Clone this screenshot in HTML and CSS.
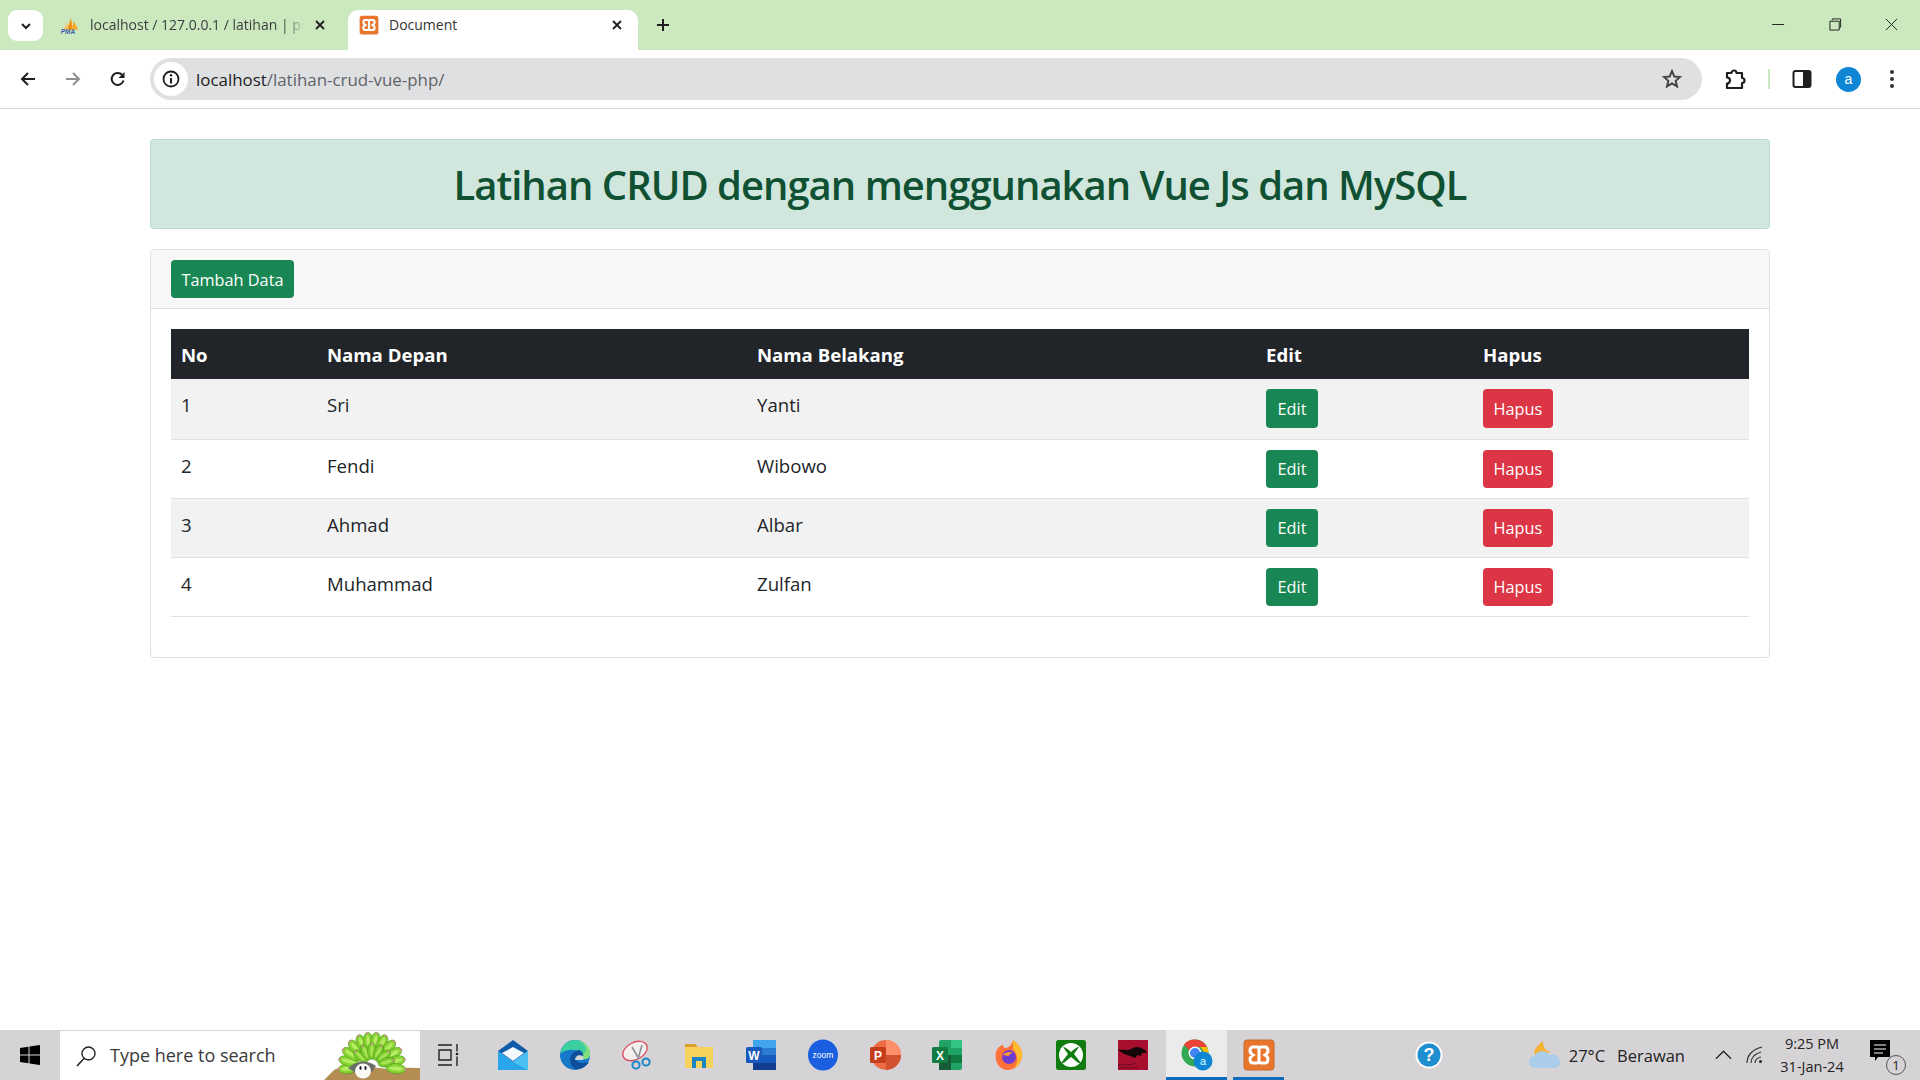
FILE: index.html
```html
<!DOCTYPE html>
<html lang="id">
<head>
<meta charset="utf-8">
<title>Document</title>
<link rel="stylesheet" href="styles.css">
</head>
<body>
<header class="chrome">
  <div class="tabstrip">
    <button class="tabsearch"><svg width="14" height="14" viewBox="0 0 14 14"><path d="M3 5l4 4 4-4" fill="none" stroke="#1f1f1f" stroke-width="2"/></svg></button>
    <div class="tab tab-first">
      <svg class="favicon" viewBox="0 0 24 20"><path d="M9 15L13 2l2 13z" fill="#f29111"/><path d="M14 15l2-9 5 9z" fill="#f6a623"/><path d="M5 15l4-8 1 8z" fill="#f7c16b"/><text x="2" y="20" class="pma">PMA</text></svg>
      <span class="tabtext fade">localhost / 127.0.0.1 / latihan | p</span>
      <svg class="tabclose" viewBox="0 0 12 12"><path d="M2 2l8 8M10 2l-8 8" stroke="#1f1f1f" stroke-width="1.8"/></svg>
    </div>
    <div class="tab tab-active">
      <svg class="favicon" viewBox="0 0 32 32"><rect x="1" y="1" width="30" height="30" rx="4" fill="#e8762d"/><path d="M10 8h4c2 0 2 3 2 3s0-3 2-3h4c2 0 3 2 3 4s-3 4-3 4 3 2 3 4-1 4-3 4h-4c-2 0-2-3-2-3s0 3-2 3h-4c-2 0-3-2-3-4s3-4 3-4-3-2-3-4 1-4 3-4zM16 11v10" fill="none" stroke="#fff" stroke-width="3.500"/></svg>
      <span class="tabtext">Document</span>
      <svg class="tabclose" viewBox="0 0 12 12"><path d="M2 2l8 8M10 2l-8 8" stroke="#1f1f1f" stroke-width="1.8"/></svg>
    </div>
    <svg class="newtab" viewBox="0 0 14 14"><path d="M7 1v12M1 7h12" stroke="#1f1f1f" stroke-width="2"/></svg>
    <div class="winctl">
      <svg viewBox="0 0 14 14"><path d="M0 7h13" stroke="#1a1a1a"/></svg>
      <svg viewBox="0 0 14 14"><path d="M3.500 2.500V1h9v9H11M1 3.500h10v9.500H1z" fill="none" stroke="#1a1a1a"/></svg>
      <svg viewBox="0 0 14 14"><path d="M1 1l12 12M13 1L1 13" stroke="#1a1a1a"/></svg>
    </div>
  </div>
  <div class="toolbar">
    <svg class="navicon" viewBox="0 0 16 16"><path d="M15 8H2M8 2L2 8l6 6" fill="none" stroke="#1f1f1f" stroke-width="2"/></svg>
    <svg class="navicon" viewBox="0 0 16 16"><path d="M1 8h13M8 2l6 6-6 6" fill="none" stroke="#8d8f92" stroke-width="2"/></svg>
    <svg class="navicon" viewBox="0 0 16 16"><path d="M13.500 9.500A6 6 0 1 1 12 3.700" fill="none" stroke="#1f1f1f" stroke-width="2"/><path d="M14.500 1v6h-6z" fill="#1f1f1f"/></svg>
    <div class="omnibox">
      <span class="siteinfo"><svg viewBox="0 0 18 18" width="18" height="18"><circle cx="9" cy="9" r="7.500" fill="none" stroke="#1f1f1f" stroke-width="1.800"/><path d="M9 8v5.500" stroke="#1f1f1f" stroke-width="2"/><circle cx="9" cy="5.300" r="1.200" fill="#1f1f1f"/></svg></span>
      <span class="url"><span class="url-host">localhost</span>/latihan-crud-vue-php/</span>
      <svg class="star" viewBox="0 0 20 20"><path d="M10 2.200l2.300 5.300 5.700.5-4.300 3.800 1.300 5.600-5-3-5 3 1.300-5.600L2 8l5.700-.5z" fill="none" stroke="#444" stroke-width="2"/></svg>
    </div>
    <svg class="tool tool-puzzle" viewBox="0 0 22 22"><path d="M3 5h4.500a2.500 2.500 0 0 1 5 0H18v5a2.500 2.500 0 0 1 0 5v5H3v-4.500a2.500 2.500 0 0 0 0-6z" fill="none" stroke="#1f1f1f" stroke-width="2.200" stroke-linejoin="round"/></svg>
    <span class="sep"></span>
    <svg class="tool tool-side" viewBox="0 0 20 20"><rect x="1.500" y="2" width="17" height="16" rx="2" fill="#fff" stroke="#1f1f1f" stroke-width="2"/><rect x="11" y="2" width="8" height="16" fill="#1f1f1f"/></svg>
    <span class="avatar">a</span>
    <svg class="tool tool-menu" viewBox="0 0 6 20"><circle cx="3" cy="3" r="2" fill="#333"/><circle cx="3" cy="10" r="2" fill="#333"/><circle cx="3" cy="17" r="2" fill="#333"/></svg>
  </div>
</header>

<main class="page">
  <div class="container">
    <div class="alert"><h1>Latihan CRUD dengan menggunakan Vue Js dan MySQL</h1></div>
    <section class="card">
      <div class="card-header"><button class="btn btn-success">Tambah Data</button></div>
      <div class="card-body">
        <table class="table">
          <colgroup><col class="c1"><col class="c2"><col class="c3"><col class="c4"><col class="c5"></colgroup>
          <thead><tr><th>No</th><th>Nama Depan</th><th>Nama Belakang</th><th>Edit</th><th>Hapus</th></tr></thead>
          <tbody>
            <tr><td>1</td><td>Sri</td><td>Yanti</td><td class="act"><button class="btn btn-success">Edit</button></td><td class="act"><button class="btn btn-danger">Hapus</button></td></tr>
            <tr><td>2</td><td>Fendi</td><td>Wibowo</td><td class="act"><button class="btn btn-success">Edit</button></td><td class="act"><button class="btn btn-danger">Hapus</button></td></tr>
            <tr><td>3</td><td>Ahmad</td><td>Albar</td><td class="act"><button class="btn btn-success">Edit</button></td><td class="act"><button class="btn btn-danger">Hapus</button></td></tr>
            <tr><td>4</td><td>Muhammad</td><td>Zulfan</td><td class="act"><button class="btn btn-success">Edit</button></td><td class="act"><button class="btn btn-danger">Hapus</button></td></tr>
          </tbody>
        </table>
      </div>
    </section>
  </div>
</main>

<footer class="taskbar">
  <svg class="start" viewBox="0 0 20 20"><path d="M0 3l8.500-1.200V9.500H0zM9.500 1.600L20 0v9.500H9.500zM0 10.500h8.500v7.700L0 17zM9.500 10.500H20V20L9.500 18.400z" fill="#000"/></svg>
  <div class="search">
    <svg class="searchicon" viewBox="0 0 22 22"><circle cx="13.500" cy="8.500" r="6.500" fill="none" stroke="#222" stroke-width="1.400"/><path d="M9 13.500L2 21" stroke="#222" stroke-width="1.600"/></svg>
    <span class="searchtext">Type here to search</span>
    <svg class="mascot" viewBox="0 0 96 50">
      <defs>
        <g id="leaf"><ellipse cx="48" cy="12" rx="5" ry="10" fill="#86d431" stroke="#4f9a1d" stroke-width=".6"/><ellipse cx="48" cy="12" rx="2" ry="7" fill="#b6ec62"/><circle cx="48" cy="3" r="1.100" fill="#e58aa8"/></g>
        <g id="leaf2"><ellipse cx="48" cy="21" rx="4.500" ry="8.500" fill="#78c92a" stroke="#4f9a1d" stroke-width=".6"/><ellipse cx="48" cy="21" rx="1.800" ry="6" fill="#a8e455"/><circle cx="48" cy="14" r="1" fill="#e58aa8"/></g>
      </defs>
      <path d="M0 50L10 40q10-5 26-4l28 3q16-2 32-1v12z" fill="#b38d52"/>
      <use href="#leaf" transform="rotate(-96 48 36)"/><use href="#leaf" transform="rotate(-78 48 36)"/><use href="#leaf" transform="rotate(-60 48 36)"/><use href="#leaf" transform="rotate(-42 48 36)"/><use href="#leaf" transform="rotate(-24 48 36)"/><use href="#leaf" transform="rotate(-8 48 36)"/><use href="#leaf" transform="rotate(8 48 36)"/><use href="#leaf" transform="rotate(24 48 36)"/><use href="#leaf" transform="rotate(42 48 36)"/><use href="#leaf" transform="rotate(60 48 36)"/><use href="#leaf" transform="rotate(78 48 36)"/><use href="#leaf" transform="rotate(96 48 36)"/>
      <use href="#leaf2" transform="rotate(-50 48 36)"/><use href="#leaf2" transform="rotate(-25 48 36)"/><use href="#leaf2"/><use href="#leaf2" transform="rotate(25 48 36)"/><use href="#leaf2" transform="rotate(50 48 36)"/><use href="#leaf2" transform="rotate(75 48 36)"/>
      <path d="M24 38q14-12 28-2l-4 6H30z" fill="#6d6f6a"/>
      <ellipse cx="39" cy="41" rx="8" ry="7.500" fill="#fbfbf6"/>
      <ellipse cx="36.500" cy="38" rx="1.100" ry="2" fill="#223"/><ellipse cx="41.500" cy="38" rx="1.100" ry="2" fill="#223"/>
    </svg>
  </div>
  <div class="apps">
    <span class="app app-view"><svg viewBox="0 0 22 24"><path d="M0 2h14M1 7h12v10H1zM0 22h14M19 1v7.500M19 13.500V23" fill="none" stroke="#222" stroke-width="1.400"/><circle cx="19" cy="11" r="1.300" fill="#222"/></svg></span>
    <span class="app"><svg viewBox="0 0 32 32"><path d="M1 12L16 1l15 11-15 11z" fill="#0f5da8"/><path d="M5 14L16 8l11 6-11 8z" fill="#f2f8fc"/><path d="M1 12l15 11 15-11v19H1z" fill="#29a5ea"/><path d="M16 23l15-11v19z" fill="#4dc0f2"/></svg></span>
    <span class="app"><svg viewBox="0 0 32 32"><circle cx="16" cy="16" r="15" fill="#1578c8"/><path d="M1 15C3 6 9 1 16 1c9 0 15 7 15 14 0 4-3 6-7 5-1-4-1-8-8-9-6-1-12 1-15 4z" fill="#3ccf9f"/><path d="M31 15c0-7-5-12-11-13 4 2 7 5 7 8 0 2-1 4-3 5 0 2 0 3 .500 5 3 .500 6.500-1 6.500-5z" fill="#7fe07a"/><path d="M11 21c0-5 4-9 9-10 3 1 5 4 4 7-4-2-8-1-7 3 1 3 6 4 13 2-3 5-9 8-14 7-3-2-5-5-5-9z" fill="#0d4f9b"/><path d="M16 21c0-4 4-6 8-4l.500 4H17z" fill="#d6d3d6"/></svg></span>
    <span class="app"><svg viewBox="0 0 32 32"><ellipse cx="14" cy="12" rx="13" ry="8.500" transform="rotate(-28 14 12)" fill="#f4efef" stroke="#d9505f" stroke-width="1.400"/><path d="M11 8l7 12M21 6l-4 14" stroke="#8d9096" stroke-width="1.600" fill="none"/><circle cx="15" cy="26" r="3.600" fill="none" stroke="#1d86c8" stroke-width="2"/><circle cx="25" cy="23" r="3.600" fill="none" stroke="#1d86c8" stroke-width="2"/></svg></span>
    <span class="app"><svg viewBox="0 0 32 32"><path d="M2 5h10l3 3h15v21H2z" fill="#f7d35c"/><path d="M2 5h10l3 3H2z" fill="#d9a02e"/><path d="M9 29V18h14v11h-4v-7h-6v7z" fill="#1d84c6"/></svg></span>
    <span class="app"><svg viewBox="0 0 32 32"><rect x="8" y="1" width="23" height="30" rx="2" fill="#2b7cd3"/><rect x="8" y="1" width="23" height="8" fill="#41a5ee"/><rect x="8" y="16" width="23" height="8" fill="#185abd"/><rect x="8" y="24" width="23" height="7" fill="#103f91"/><rect x="1" y="8" width="16" height="16" rx="1.500" fill="#185abd"/><text x="9" y="21" class="appletter">W</text></svg></span>
    <span class="app"><svg viewBox="0 0 32 32"><ellipse cx="16" cy="16" rx="15" ry="15.500" fill="#1a5fe0"/><text x="16" y="19" class="zoomword">zoom</text></svg></span>
    <span class="app"><svg viewBox="0 0 32 32"><circle cx="17" cy="16" r="15" fill="#ed6c47"/><path d="M17 1a15 15 0 0 1 15 15H17z" fill="#ff8f6b"/><path d="M17 16h15a15 15 0 0 1-15 15z" fill="#d35230"/><rect x="1" y="8" width="16" height="16" rx="1.500" fill="#c43e1c"/><text x="9" y="21" class="appletter">P</text></svg></span>
    <span class="app"><svg viewBox="0 0 32 32"><rect x="8" y="1" width="23" height="30" rx="2" fill="#21a366"/><rect x="20" y="1" width="11" height="8" fill="#33c481"/><rect x="8" y="16" width="12" height="15" fill="#185c37"/><rect x="20" y="16" width="11" height="8" fill="#107c41"/><rect x="1" y="8" width="16" height="16" rx="1.500" fill="#107c41"/><text x="9" y="21" class="appletter">X</text></svg></span>
    <span class="app"><svg viewBox="0 0 32 32"><path d="M3 13C5 8 8 6 10 6c0 2 1 3 3 3 4-1 6-4 7-8 7 5 10 11 9 17-1 7-7 13-14 13C7 31 1 24 3 13z" fill="#ff7139"/><path d="M20 1c7 5 10 11 9 17-1 5-4 9-8 11 5-6 4-14-1-19z" fill="#ffbd2e"/><circle cx="16" cy="18" r="7" fill="#6e3ccf"/><path d="M10 16c2-3 7-4 10-2-3 0-4 2-4 3z" fill="#ff9d2e"/></svg></span>
    <span class="app"><svg viewBox="0 0 32 32"><rect x="1" y="1" width="30" height="30" rx="2.500" fill="#107c10"/><circle cx="16" cy="16" r="12" fill="#fff"/><path d="M16 13C13 10 10 8 8 8l5 7-7 9c3 1 6-3 10-6 4 3 7 7 10 6l-7-9 5-7c-2 0-5 2-8 5z" fill="#107c10"/></svg></span>
    <span class="app"><svg viewBox="0 0 32 32"><rect x="1" y="1" width="30" height="30" fill="#a80f2e"/><path d="M1 26c6-1 12 1 18-2M1 29c7-1 13 1 20-1" stroke="#6d0a20" stroke-width="1" fill="none"/><path d="M1 11c6-1 9 1 13-1 3-2 7-3 10-1l4 2 2 3-5 0-1 3-3-1-3 3-5-2-6-2z" fill="#140608"/></svg></span>
    <span class="app app-open app-chrome"><svg viewBox="0 0 32 32"><circle cx="14" cy="14" r="13.500" fill="#34a853"/><path d="M14 .5A13.500 13.500 0 0 1 26 8H14a6 6 0 0 0-5.500 3.500L3 5.500A13.500 13.500 0 0 1 14 .5z" fill="#ea4335"/><path d="M26 8a13.500 13.500 0 0 1-12 19.500l5-9a6 6 0 0 0 0-10.500z" fill="#fbbc04"/><circle cx="14" cy="14" r="6.500" fill="#fff"/><circle cx="14" cy="14" r="5" fill="#4285f4"/><circle cx="22" cy="22" r="9.500" fill="#0f86d4"/><text x="22" y="26" class="chromea">a</text></svg></span>
    <span class="app app-open app-xampp"><svg viewBox="0 0 32 32"><rect x="1" y="1" width="30" height="30" rx="3" fill="#e8762d" stroke="#c9682c"/><path d="M10 8h4c2 0 2 3 2 3s0-3 2-3h4c2 0 3 2 3 4s-3 4-3 4 3 2 3 4-1 4-3 4h-4c-2 0-2-3-2-3s0 3-2 3h-4c-2 0-3-2-3-4s3-4 3-4-3-2-3-4 1-4 3-4zM16 11v10" fill="none" stroke="#fff" stroke-width="3"/></svg></span>
  </div>
  <svg class="help" viewBox="0 0 28 28"><circle cx="14" cy="14" r="13.500" fill="#fff"/><circle cx="14" cy="14" r="11.500" fill="#1d8fd0"/><text x="14" y="20" class="helpq">?</text></svg>
  <div class="tray">
    <svg class="weather" viewBox="0 0 32 30"><path d="M14 1c0 6 2 10 8 11L8 16C3 13 5 8 14 1z" fill="#f5b236"/><path d="M6 28a6 6 0 0 1 0-12c1-5 11-7 14-1 5-2 11 1 11 7 0 4-3 6-6 6z" fill="#a9cdeb"/></svg>
    <span class="temp">27°C</span>
    <span class="cond">Berawan</span>
    <svg class="chev" viewBox="0 0 18 10"><path d="M1 9l8-8 8 8" fill="none" stroke="#222" stroke-width="1.300"/></svg>
    <svg class="wifi" viewBox="0 0 20 20"><path d="M2 18C2 10 8 4 17 2M6 18c0-5 4-9 10-11M10 18c0-3 2-5 6-6" fill="none" stroke="#333" stroke-width="1.200"/><circle cx="15.500" cy="16.500" r="1.500" fill="#222"/></svg>
    <div class="clock"><span>9:25 PM</span><span>31-Jan-24</span></div>
    <span class="notif">
      <svg viewBox="0 0 20 22" width="20" height="22"><path d="M0 0h20v17H8l-3 4v-4H0z" fill="#000"/><path d="M4 5h12M4 9h12M4 13h9" stroke="#fff"/></svg>
      <span class="badge">1</span>
    </span>
  </div>
</footer>
</body>
</html>
```

FILE: styles.css
```css
* { box-sizing: border-box; }
html, body { margin: 0; height: 100%; }
body {
  display: flex;
  flex-direction: column;
  height: 100vh;
  overflow: hidden;
  background: #fff;
  font-family: "Open Sans", "Noto Sans", sans-serif;
  color: #212529;
}

/* browser chrome */
.chrome { flex: none; height: 109px; }
.tabstrip {
  height: 50px;
  background: #cce8bf;
  display: flex;
  align-items: flex-end;
  padding-left: 8px;
}
.tabsearch {
  width: 35px;
  height: 31px;
  margin-bottom: 9px;
  border: 0;
  border-radius: 9px;
  background: #fff;
  display: flex;
  align-items: center;
  justify-content: center;
  padding: 0;
}
.tab {
  flex: none;
  width: 290px;
  height: 40px;
  display: flex;
  align-items: center;
  gap: 9px;
  padding: 0 12px 11px 10px;
  font-size: 14px;
  color: #3c3f41;
}
.tab-first { width: 305px; padding-left: 16px; padding-right: 19px; }
.tab-active { background: #fff; border-radius: 10px 10px 0 0; color: #333; }
.favicon { width: 22px; height: 20px; flex: none; }
.tabtext { flex: 1; white-space: nowrap; overflow: hidden; }
.fade { -webkit-mask-image: linear-gradient(90deg, #000 90%, transparent); mask-image: linear-gradient(90deg, #000 90%, transparent); }
.tabclose { width: 12px; height: 12px; flex: none; margin-right: 3px; }
.pma { font: italic bold 7px "Liberation Sans", sans-serif; fill: #3b5ba5; }
.newtab { width: 14px; height: 14px; margin: 0 0 18px 18px; flex: none; }
.winctl { margin-left: auto; height: 50px; display: flex; align-items: center; gap: 43px; padding: 0 22px 2px 0; }
.winctl svg { width: 13px; height: 13px; display: block; }
.winctl svg:first-child { margin-right: 1px; }

.toolbar {
  height: 59px;
  padding: 8px 0 8px 0;
  border-bottom: 1px solid #d3d3d3;
  background: #fff;
  display: flex;
  align-items: center;
}
.navicon { width: 16px; height: 16px; margin-left: 20px; margin-right: 9px; flex: none; }
.navicon:nth-child(3) { margin-right: 24px; }
.omnibox {
  width: 1552px;
  height: 42px;
  border-radius: 21px;
  background: #dfe0e2;
  display: flex;
  align-items: center;
  padding: 0 20px 0 4px;
}
.siteinfo { width: 34px; height: 34px; border-radius: 50%; background: #fff; display: flex; align-items: center; justify-content: center; flex: none; }
.url { margin-left: 8px; flex: 1; font-size: 16.9px; line-height: 24px; padding-top: 2px; color: #5f6368; }
.url-host { color: #222; }
.star { width: 20px; height: 20px; }
.tool { flex: none; }
.tool-puzzle { width: 22px; height: 22px; margin-left: 22px; }
.sep { width: 2px; height: 20px; background: #cce8bf; margin-left: 22px; }
.tool-side { width: 20px; height: 20px; margin-left: 22px; }
.avatar { width: 25px; height: 25px; border-radius: 50%; background: #0f86d4; color: #fff; font: 14px/25px "Liberation Sans", sans-serif; text-align: center; margin-left: 24px; flex: none; }
.tool-menu { width: 6px; height: 20px; margin-left: 28px; }

/* page content */
.page { flex: 1; min-height: 0; }
.container { width: 1620px; margin: 30px auto 0; display: flex; flex-direction: column; gap: 20px; }
.alert {
  height: 90px;
  padding-top: 2px;
  background: #d1e7dd;
  border: 1px solid #badbcc;
  border-radius: 4px;
  display: flex;
  align-items: center;
  justify-content: center;
}
.alert h1 { margin: 0; font-size: 40px; font-weight: 600; letter-spacing: -1px; color: #0f5132; line-height: 1.2; }
.card { height: 409px; border: 1px solid #dfdfdf; border-radius: 4px; }
.card-header { height: 59px; padding: 10px 20px; background: #f7f7f7; border-bottom: 1px solid #dfdfdf; border-radius: 4px 4px 0 0; }
.card-body { padding: 20px; }
.btn {
  display: block;
  height: 38px;
  min-width: 52px;
  border: 0;
  border-radius: 4px;
  padding: 1px 10.5px 0;
  font-family: inherit;
  font-size: 16.3px;
  color: #fff;
}
.btn-success { background: #198754; }
.btn-danger { background: #dc3545; }
.table { width: 1578px; border-collapse: collapse; table-layout: fixed; font-size: 18.6px; }
.c1 { width: 146px; } .c2 { width: 430px; } .c3 { width: 509px; } .c4 { width: 217px; } .c5 { width: 276px; }
th { height: 50px; padding: 0 10px; background: #212529; color: #fff; text-align: left; font-weight: 700; }
td { padding: 13px 10px 0; height: 59px; border-bottom: 1px solid #dee2e6; vertical-align: top; line-height: 26px; }
td.act { padding-top: 10px; }
tbody tr:nth-child(odd) td { background: #f2f2f2; }
tbody tr:first-child td { height: 60px; }
tbody tr:first-child .btn { height: 39px; }

/* taskbar */
.taskbar {
  flex: none;
  height: 50px;
  background: #d6d3d6;
  display: flex;
  align-items: center;
}
.start { width: 20px; height: 20px; margin: 0 20px 0 20px; flex: none; }
.search {
  width: 360px;
  height: 49px;
  margin-top: 1px;
  background: #fff;
  display: flex;
  align-items: center;
  position: relative;
  overflow: hidden;
  flex: none;
}
.searchicon { width: 22px; height: 22px; margin-left: 15px; }
.searchtext { margin-left: 13px; margin-bottom: 2px; font-size: 18px; color: #3a3a3a; }
.mascot { position: absolute; right: 0; bottom: 0; width: 96px; height: 50px; }
.apps { display: flex; }
.app { width: 62px; height: 50px; display: flex; align-items: center; justify-content: center; flex: none; }
.app svg { width: 32px; height: 32px; }
.app-view svg { width: 22px; height: 24px; margin-right: 4px; }
.app-open { border-bottom: 3px solid #0f6cbd; padding-top: 3px; }
.app-chrome { width: 61px; margin-left: 2px; background: #ecebec; }
.app-xampp { width: 51px; margin-left: 6px; }
.appletter { font: bold 12px "Liberation Sans", sans-serif; fill: #fff; text-anchor: middle; }
.zoomword { font: 8.500px "Liberation Sans", sans-serif; fill: #fff; text-anchor: middle; }
.chromea { font: 11px "Liberation Sans", sans-serif; fill: #dff; text-anchor: middle; }
.help { width: 28px; height: 28px; margin-left: 131px; flex: none; }
.helpq { font: bold 18px "Liberation Sans", sans-serif; fill: #fff; text-anchor: middle; }
.tray { margin-left: auto; display: flex; align-items: center; color: #222; }
.weather { width: 32px; height: 30px; }
.temp { margin-left: 8px; font-size: 16.5px; }
.cond { margin-left: 12px; font-size: 16.5px; }
.chev { width: 17px; height: 10px; margin-left: 30px; }
.wifi { width: 20px; height: 20px; margin-left: 13px; }
.clock { margin-left: 14px; display: flex; flex-direction: column; align-items: center; gap: 4px; font-size: 14.5px; line-height: 19px; width: 66px; white-space: nowrap; }
.notif { position: relative; width: 30px; height: 30px; margin: 0 20px 0 25px; }
.badge { position: absolute; right: -6px; bottom: -5px; width: 20px; height: 20px; border-radius: 50%; border: 1px solid #555; background: #d6d3d6; font-size: 13px; line-height: 18px; text-align: center; }
```
